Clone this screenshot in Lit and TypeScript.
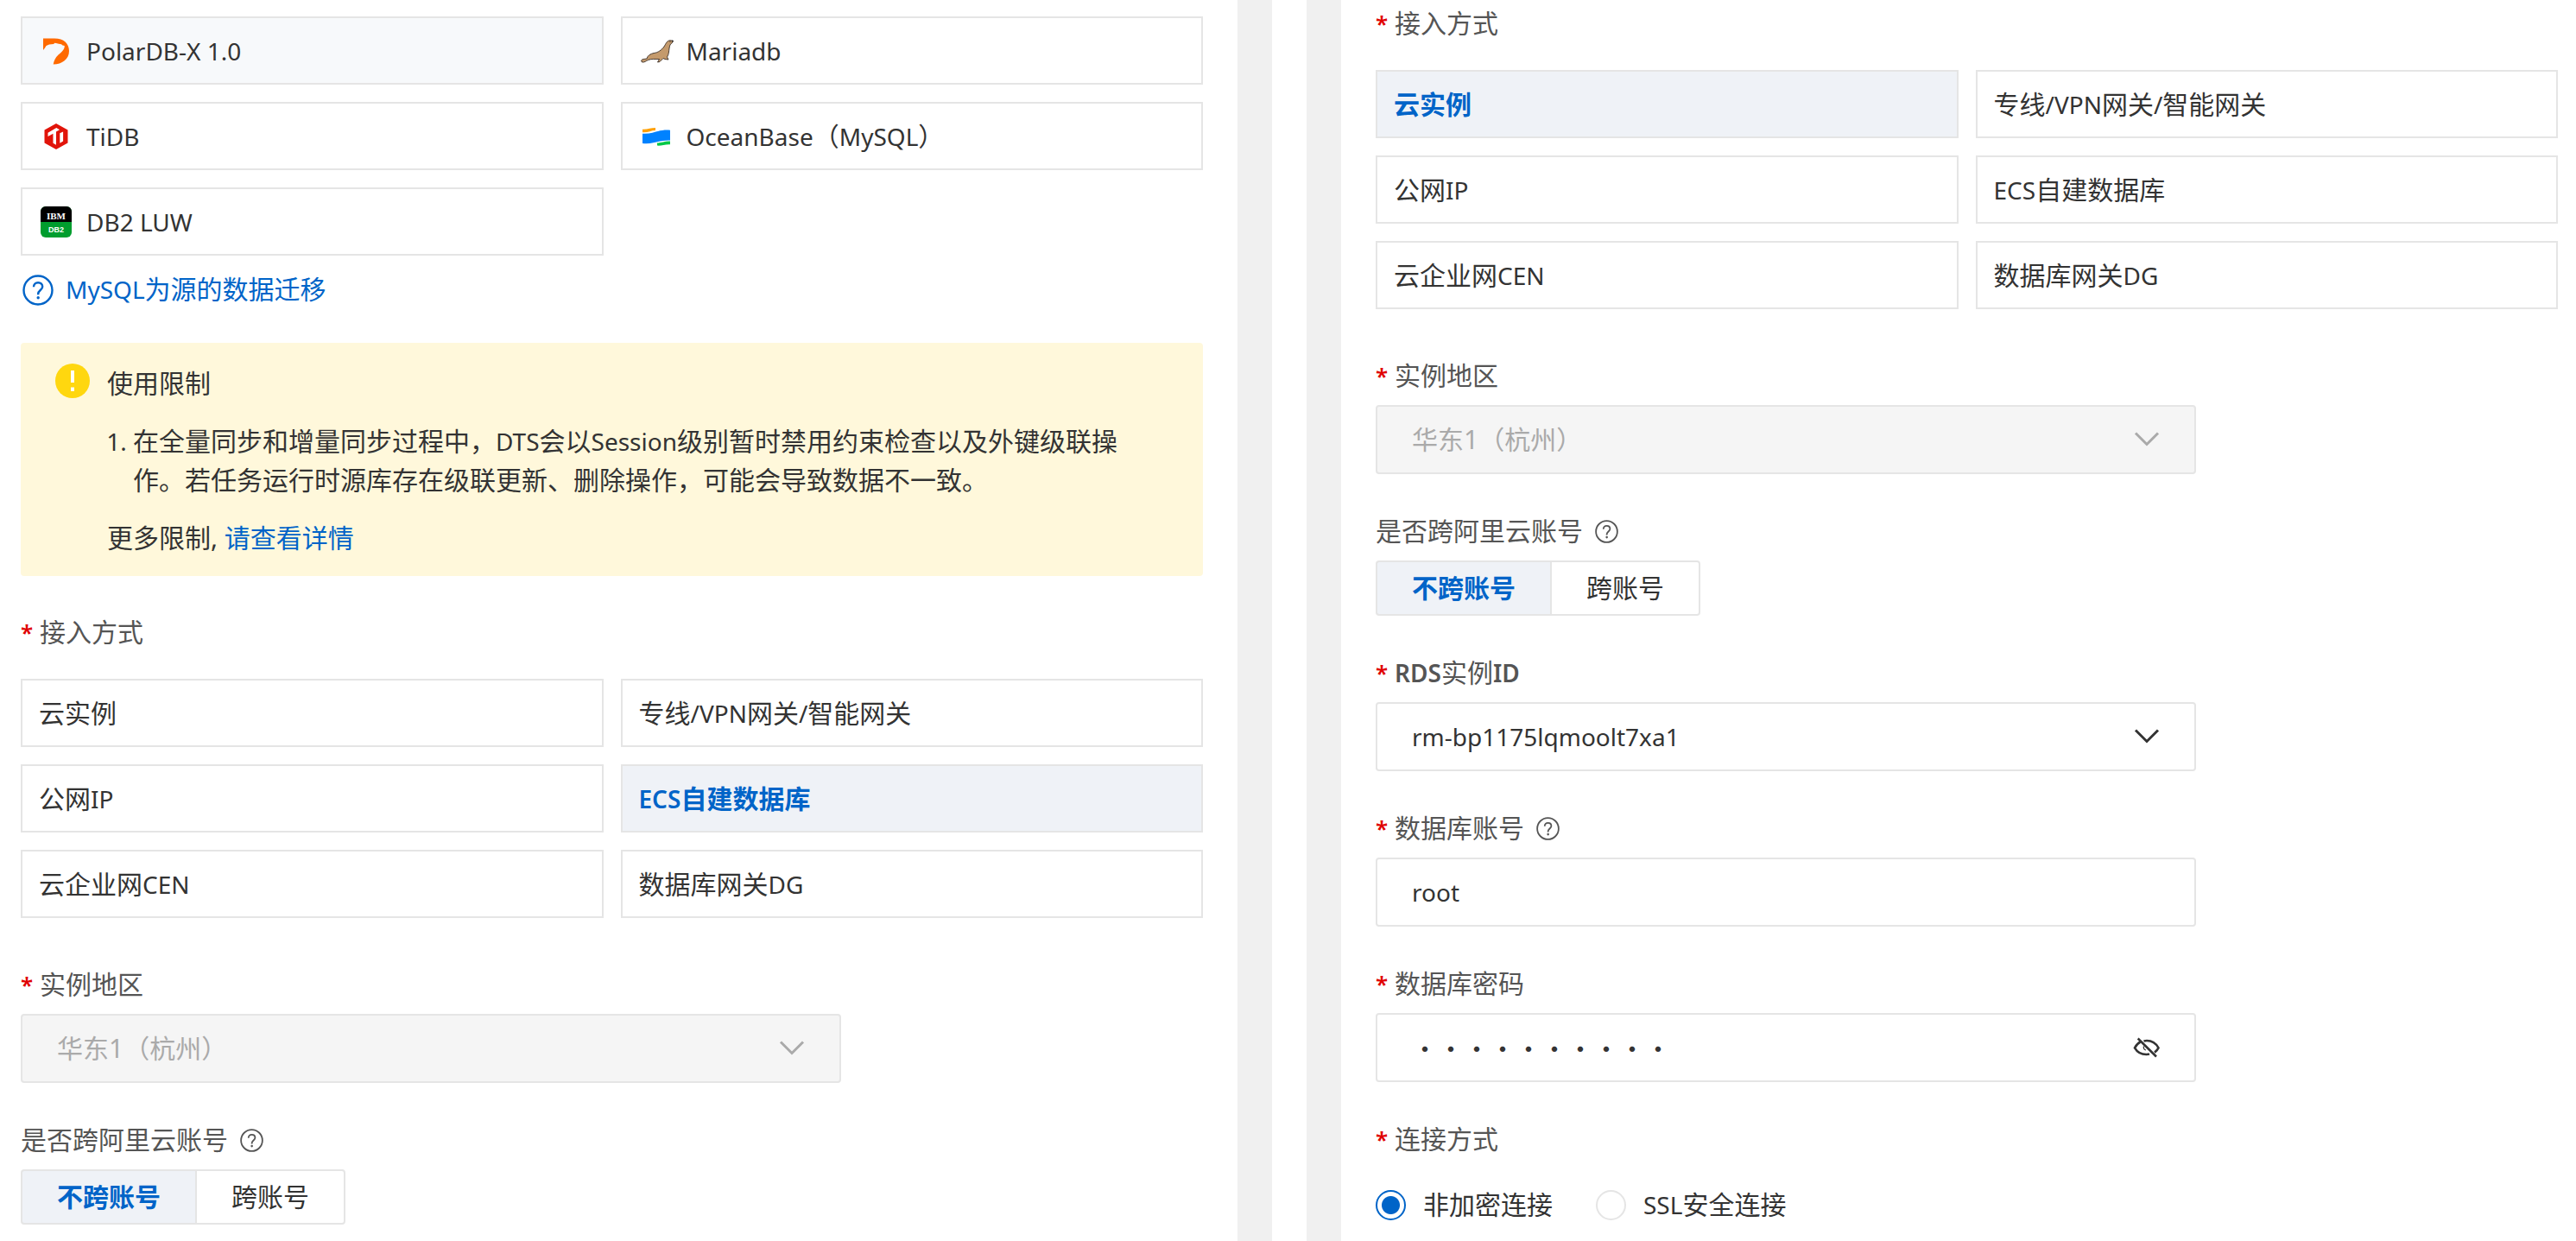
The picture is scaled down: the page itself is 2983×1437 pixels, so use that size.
import { LitElement, html, css, svg, nothing, type TemplateResult } from "lit";
import { customElement, property, state } from "lit/decorators.js";
import { classMap } from "lit/directives/class-map.js";

/** Wraps runs of Latin letters and digits so they sit evenly beside Chinese characters. */
function mixed(text: string): TemplateResult[] {
  return text
    .split(/([\x21-\x7e]+(?: [\x21-\x7e]+)*)/)
    .filter((part) => part.length > 0)
    .map((part) =>
      /^[\x21-\x7e]/.test(part) ? html`<span class="latin">${part}</span>` : html`${part}`
    );
}

const base = css`
  * {
    box-sizing: border-box;
  }
  button,
  input,
  select {
    font: inherit;
    color: inherit;
    margin: 0;
  }
  .latin {
    font-size: 28px;
    line-height: 1;
  }
`;

const helpIcon = html`<svg class="help" viewBox="0 0 36 36" aria-hidden="true">
  <circle cx="18" cy="18" r="16.5" fill="none" stroke="currentColor" stroke-width="2.4" />
  <path
    d="M13 14.2c0-3 2.1-5 5.1-5s5.1 1.9 5.1 4.7c0 3.900-5 4.300-5 8.300v1"
    fill="none"
    stroke="currentColor"
    stroke-width="2.4"
  />
  <circle cx="18.2" cy="26.8" r="1.7" fill="currentColor" />
</svg>`;

const chevron = html`<svg class="chevron" viewBox="0 0 30 18" aria-hidden="true">
  <path d="M2 1.500l13 13L28 1.500" fill="none" stroke="currentColor" stroke-width="3" />
</svg>`;

const logos: Record<string, TemplateResult> = {
  polar: svg`
    <path fill="#ff6a00" d="M3 3.5H16C27 3.5 33 9.5 33 18C33 27.5 25 33.5 14.7 33.5C15.5 29 17 26 20.5 22.5C24 19.5 26.5 17.5 27.500 14.5L27.800 12L25.500 11.500L24 10.300L21 9.800L18 9L16.500 8.800L15 10L10 10.500L6.500 12L5 14.500L3 17z"/>`,
  maria: svg`
    <path fill="#c49a6c" stroke="#3a2e26" stroke-width=".9" stroke-linejoin="round" d="M2.500 26C4 24 6 24.500 9 24C10 20 13 18.500 17 17.500C22 17 26 14 29 10C31 7 32 3 36 2.800L39.500 3.300L38.500 5.500C36 6.500 35.500 9 35 12C34.500 16 34.500 19 32.500 22L34 25L30 24.500L28 23.500L24 27.500L21.500 28L23.500 24.500C19 24.500 14 24 10.500 25.500C8 26.500 6.500 28.500 3.500 28Z"/>
    <path fill="#222" d="M38 2.400l2 .8-1.500 1.800z"/><circle cx="36" cy="4.200" r=".6" fill="#222"/>`,
  tidb: svg`
    <path fill="#e1140a" d="M18 3l13.500 7.500v15L18 33 4.500 25.500v-15z"/>
    <path fill="#fff" d="M8.500 13.800l9.800-5.700 3.700 2.200-4 2.300v15.200l-3.500-2V14.700l-6 3.200zM22.300 14.200l3.800-1.800v11.200l-3.800 2.200z"/>`,
  ocean: svg`
    <path fill="#0082ff" d="M2 14.700C13 16 20 9.500 34 10.700V22.500C20 22 15 27.500 2 26z"/>
    <path fill="#ffa000" d="M2 9.700C8 10 12 8 17 8v3C12 11 8 13.700 2 13.200z"/>
    <path fill="#00c846" d="M19 25.500C24 25.500 28 23 34 23.500v3.800C28 27 24 29 19 28.600z"/>`,
  db2: svg`
    <rect x="0" y="0" width="36" height="36" rx="6" fill="#009d2e"/>
    <path fill="#000" d="M0 18V6a6 6 0 0 1 6-6h24a6 6 0 0 1 6 6v12z"/>
    <text x="18" y="15" text-anchor="middle" font-family="Liberation Serif, serif" font-size="11" font-weight="700" fill="#fff">IBM</text>
    <text x="18" y="29.500" text-anchor="middle" font-family="Liberation Sans, sans-serif" font-size="9" font-weight="700" fill="#fff">DB2</text>`,
};

interface Choice {
  text: string;
  logo?: string;
}

@customElement("choice-grid")
export class ChoiceGrid extends LitElement {
  static styles = [
    base,
    css`
      :host {
        display: grid;
        grid-template-columns: repeat(2, minmax(0, 1fr));
        gap: 20px;
      }
      .card {
        display: flex;
        align-items: center;
        gap: 15px;
        height: 79px;
        padding: 0 19px;
        border: 2px solid #e5e5e5;
        background: #fff;
        color: #333;
        text-align: left;
        cursor: pointer;
      }
      .card.hovered {
        background: #f7f9fb;
      }
      .card.selected {
        background: #eff2f7;
        color: #0064c8;
        font-weight: 700;
      }
      .card.selected .latin {
        font-weight: 600;
      }
      .logo {
        width: 40px;
        height: 36px;
        flex: none;
      }
    `,
  ];

  @property({ attribute: false }) choices: Choice[] = [];
  @property() selected = "";
  @property() hovered = "";

  render() {
    return this.choices.map(
      (c) => html`<button
        type="button"
        class=${classMap({
          card: true,
          selected: c.text === this.selected,
          hovered: c.text === this.hovered,
        })}
        aria-pressed=${c.text === this.selected}
        @click=${() => (this.selected = c.text)}
      >
        ${c.logo
          ? html`<svg class="logo" viewBox=${c.logo === "maria" ? "0 -3 40 36" : "0 0 36 36"} aria-hidden="true">
              ${logos[c.logo]}
            </svg>`
          : nothing}
        <span>${mixed(c.text)}</span>
      </button>`
    );
  }
}

@customElement("account-switch")
export class AccountSwitch extends LitElement {
  static styles = [
    base,
    css`
      :host {
        display: flex;
      }
      .item {
        height: 64px;
        padding: 0 40px;
        border: 2px solid #e5e5e5;
        background: #fff;
        color: #333;
        cursor: pointer;
      }
      .item:first-child {
        border-right-width: 0;
        border-radius: 4px 0 0 4px;
      }
      .item:last-child {
        border-radius: 0 4px 4px 0;
      }
      .item.selected {
        background: #eff2f7;
        color: #0064c8;
        font-weight: 700;
      }
    `,
  ];

  @state() private value = "不跨账号";

  render() {
    return ["不跨账号", "跨账号"].map(
      (t) => html`<button
        type="button"
        class=${classMap({ item: true, selected: t === this.value })}
        aria-pressed=${t === this.value}
        @click=${() => (this.value = t)}
      >${t}</button>`
    );
  }
}

const ACCESS: Choice[] = [
  { text: "云实例" },
  { text: "专线/VPN网关/智能网关" },
  { text: "公网IP" },
  { text: "ECS自建数据库" },
  { text: "云企业网CEN" },
  { text: "数据库网关DG" },
];

const DATABASES: Choice[] = [
  { text: "PolarDB-X 1.0", logo: "polar" },
  { text: "Mariadb", logo: "maria" },
  { text: "TiDB", logo: "tidb" },
  { text: "OceanBase（MySQL）", logo: "ocean" },
  { text: "DB2 LUW", logo: "db2" },
];

@customElement("app-root")
export class AppRoot extends LitElement {
  static styles = [
    base,
    css`
      :host {
        display: block;
        height: 100vh;
        overflow: hidden;
        background: #fff;
        color: #333;
        font-family: "Noto Sans", "Noto Sans CJK SC", sans-serif;
        font-size: 30px;
        line-height: 44px;
      }
      .page {
        display: grid;
        grid-template-columns: minmax(0, 1fr) 200px minmax(0, 1fr);
        min-height: 100%;
        padding: 0 21px 0 24px;
      }
      .gutter {
        display: grid;
        grid-template-columns: 40px 40px;
        justify-content: center;
        gap: 40px;
      }
      .bar {
        background: #f0f0f0;
      }
      .source {
        padding-top: 19px;
      }
      .target {
        padding-top: 5px;
      }
      .group {
        display: flex;
        flex-direction: column;
        gap: 32px;
        margin-bottom: 55px;
      }
      .field {
        display: flex;
        flex-direction: column;
        gap: 12px;
        margin-bottom: 44px;
      }
      .label {
        display: flex;
        align-items: center;
        height: 44px;
        color: #555;
      }
      .required::before {
        content: "*";
        width: 22px;
        color: #e00000;
        font-size: 26px;
        font-weight: 600;
      }
      .label .latin {
        font-weight: 600;
      }
      .label .help {
        width: 27px;
        height: 27px;
        margin-left: 14px;
      }
      a {
        color: #0064c8;
        text-decoration: none;
      }
      .doc {
        display: flex;
        align-items: center;
        gap: 14px;
        width: max-content;
        margin: 17px 0 38px;
        padding-left: 2px;
      }
      .doc span {
        padding-bottom: 2px;
      }
      .doc .help {
        width: 36px;
        height: 36px;
      }
      .notice {
        display: flex;
        align-items: flex-start;
        gap: 20px;
        margin-bottom: 43px;
        padding: 24px 48px 22px 40px;
        border-radius: 4px;
        background: #fff8db;
        line-height: 45px;
      }
      .notice .sign {
        flex: none;
        width: 40px;
        height: 40px;
      }
      .notice p,
      .notice ol {
        margin: 0 0 22px;
        padding: 0;
      }
      .notice ol {
        padding-left: 30px;
      }
      .notice li::marker {
        font-size: 28px;
      }
      .notice p:last-child {
        margin: 0;
      }
      .box {
        display: grid;
        align-items: center;
        width: 950px;
        max-width: 100%;
      }
      .box > * {
        grid-area: 1 / 1;
      }
      .control {
        width: 100%;
        height: 80px;
        padding: 0 40px;
        border: 2px solid #e5e5e5;
        border-radius: 4px;
        background: #fff;
        color: #333;
        font-size: 28px;
        appearance: none;
        outline: none;
      }
      .control:disabled {
        background: #f5f5f5;
        color: #aaa;
        opacity: 1;
      }
      .control.region {
        font-size: 30px;
      }
      .control.password {
        font-family: "Noto Sans CJK SC", sans-serif;
        font-size: 30px;
      }
      .chevron {
        justify-self: end;
        width: 30px;
        height: 18px;
        margin-right: 42px;
        pointer-events: none;
      }
      .control:disabled + .chevron {
        color: #aaa;
      }
      .reveal {
        justify-self: end;
        display: flex;
        margin-right: 41px;
        padding: 0;
        border: 0;
        background: none;
        cursor: pointer;
      }
      .reveal svg {
        width: 32px;
        height: 24px;
      }
      .radios {
        display: flex;
        gap: 50px;
      }
      .radio {
        display: flex;
        align-items: center;
        gap: 20px;
      }
      .radio input {
        appearance: none;
        width: 35px;
        height: 35px;
        border: 2px solid #e5e5e5;
        border-radius: 50%;
        background: #fff;
      }
      .radio input:checked {
        border-color: #0064c8;
        background: radial-gradient(circle, #0064c8 10px, #fff 11px);
      }
    `,
  ];

  @state() private revealed = false;

  private region(id: string) {
    return html`<div class="field">
        <label class="label required" for=${id}>实例地区</label>
        <div class="box">
          <select class="control region" id=${id} disabled>
            <option>华东1（杭州）</option>
          </select>
          ${chevron}
        </div>
      </div>
      <div class="field">
        <div class="label">是否跨阿里云账号${helpIcon}</div>
        <account-switch></account-switch>
      </div>`;
  }

  private access(selected: string) {
    return html`<div class="group">
      <div class="label required">接入方式</div>
      <choice-grid .choices=${ACCESS} selected=${selected}></choice-grid>
    </div>`;
  }

  render() {
    return html`<main class="page">
      <section class="source">
        <choice-grid .choices=${DATABASES} hovered="PolarDB-X 1.0"></choice-grid>
        <a class="doc" href="#guide">${helpIcon}<span>${mixed("MySQL为源的数据迁移")}</span></a>
        <div class="notice">
          <svg class="sign" viewBox="0 0 40 40" aria-hidden="true">
            <circle cx="20" cy="20" r="20" fill="#ffd70f" />
            <path d="M18 8h4v14h-4zM18 27.500h4v4.500h-4z" fill="#fff" />
          </svg>
          <div>
            <p>使用限制</p>
            <ol>
              <li>
                ${mixed(
                  "在全量同步和增量同步过程中，DTS会以Session级别暂时禁用约束检查以及外键级联操作。若任务运行时源库存在级联更新、删除操作，可能会导致数据不一致。"
                )}
              </li>
            </ol>
            <p>更多限制, <a href="#limits">请查看详情</a></p>
          </div>
        </div>
        ${this.access("ECS自建数据库")} ${this.region("source-region")}
      </section>
      <div class="gutter"><div class="bar"></div><div class="bar"></div></div>
      <section class="target">
        ${this.access("云实例")} ${this.region("target-region")}
        <div class="field">
          <label class="label required" for="rds"><span>${mixed("RDS实例ID")}</span></label>
          <div class="box">
            <select class="control" id="rds">
              <option>rm-bp1175lqmoolt7xa1</option>
            </select>
            ${chevron}
          </div>
        </div>
        <div class="field">
          <label class="label required" for="account">数据库账号${helpIcon}</label>
          <div class="box">
            <input class="control" id="account" type="text" .value=${"root"} />
          </div>
        </div>
        <div class="field">
          <label class="label required" for="password">数据库密码</label>
          <div class="box">
            <input
              class="control password"
              id="password"
              type=${this.revealed ? "text" : "password"}
              .value=${"0123456789"}
            />
            <button
              class="reveal"
              type="button"
              aria-label="显示密码"
              @click=${() => (this.revealed = !this.revealed)}
            >
              <svg viewBox="0 0 32 24" aria-hidden="true">
                <g fill="none" stroke="currentColor" stroke-width="2.6">
                  <path d="M8.500 5.500C5.500 7 3.500 9.500 2 12.300C5 17.500 9.500 20 15.500 20C17 20 18 19.900 19 19.600" />
                  <path d="M12.500 4.500C13.600 4.200 14.800 4 16 4C22 4 26.500 7 29.500 12.300C28.500 14.300 27 16.200 25 17.600" />
                  <path d="M5.700 1.500L27 22.500" />
                  <path d="M12.500 10.500c-.6 2 .4 3.800 2.500 4.500" stroke-width="1.2" />
                </g>
              </svg>
            </button>
          </div>
        </div>
        <div class="group">
          <div class="label required">连接方式</div>
          <div class="radios">
            <label class="radio"><input type="radio" name="link" checked />非加密连接</label>
            <label class="radio"><input type="radio" name="link" /><span>${mixed("SSL安全连接")}</span></label>
          </div>
        </div>
      </section>
    </main>`;
  }
}
